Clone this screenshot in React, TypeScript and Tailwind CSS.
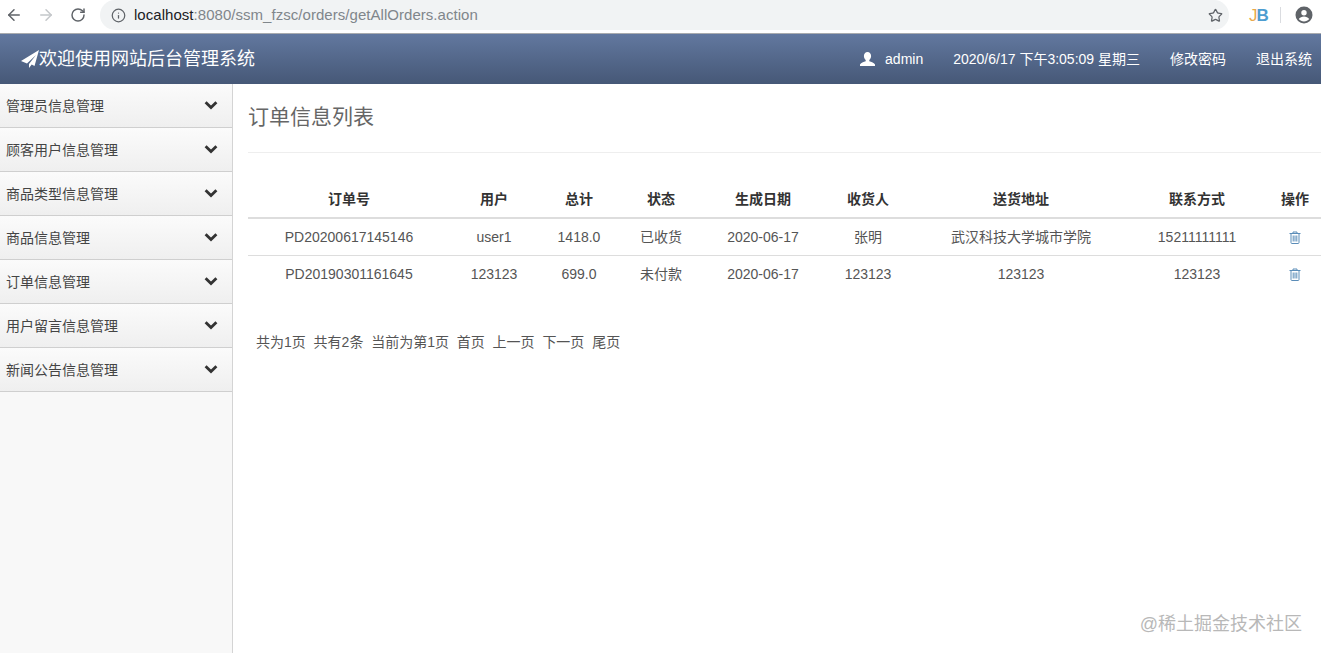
import { ArrowLeft, ArrowRight, RotateCw, Info, Star } from "lucide-react";

const font = { fontFamily: '"Liberation Sans", "Noto Sans CJK SC", sans-serif' };

const menu = ["管理员信息管理", "顾客用户信息管理", "商品类型信息管理", "商品信息管理", "订单信息管理", "用户留言信息管理", "新闻公告信息管理"];
const cols = ["订单号", "用户", "总计", "状态", "生成日期", "收货人", "送货地址", "联系方式"];
const rows = [
  ["PD20200617145146", "user1", "1418.0", "已收货", "2020-06-17", "张明", "武汉科技大学城市学院", "15211111111"],
  ["PD20190301161645", "123123", "699.0", "未付款", "2020-06-17", "123123", "123123", "123123"],
];
const pager = ["共为1页", "共有2条", "当前为第1页", "首页", "上一页", "下一页", "尾页"];

function Chevron() {
  return (
    <svg width="14" height="10" viewBox="0 0 14 10" className="text-[#333]">
      <path d="M1.6 2.2 7 7.6l5.4-5.4" fill="none" stroke="currentColor" strokeWidth="2.8" />
    </svg>
  );
}

function Trash() {
  return (
    <svg width="12" height="13" viewBox="0 0 12 13" fill="none" stroke="#5b8db8" strokeWidth="1">
      <path d="M.5 2.5h11M4 2.5V1h4v1.5M2 2.5v9.2c0 .5.3.8.8.8h6.4c.5 0 .8-.3.8-.8V2.5M4.2 4.5v6M6 4.5v6M7.8 4.5v6" />
    </svg>
  );
}

export default function App() {
  return (
    <div style={font} className="relative flex h-[653px] w-[1321px] flex-col overflow-hidden bg-white text-sm text-[#333]">
      <div className="flex h-[34px] shrink-0 items-center border-b border-[#a9abae] bg-white pb-[3px]">
        <ArrowLeft size={18} strokeWidth={2} className="ml-[5px] text-[#5f6368]" />
        <ArrowRight size={18} strokeWidth={2} className="ml-[14px] text-[#c4c7ca]" />
        <RotateCw size={16} strokeWidth={2.2} className="ml-[15px] text-[#5f6368]" />
        <div className="ml-[14px] flex h-[30px] w-[1129px] items-center rounded-full bg-[#f1f3f4] pl-[11px] pr-[6px]">
          <Info size={15} className="text-[#5f6368]" />
          <span className="ml-[8px] text-[15px] tracking-[0.04px] text-[#80868b]"><span className="text-[#202124]">localhost</span>:8080/ssm_fzsc/orders/getAllOrders.action</span>
          <Star size={15} strokeWidth={2} className="ml-auto text-[#5f6368]" />
        </div>
        <span className="ml-[20px] w-[17px] text-[17px] leading-none tracking-[-1px]"><span className="text-[#e8a94c]">J</span><span className="font-bold text-[#4d9dd0]">B</span></span>
        <div className="ml-[14px] h-[16px] w-px bg-[#dadce0]" />
        <svg width="18" height="18" viewBox="0 0 18 18" className="ml-[14px]">
          <circle cx="9" cy="9" r="8.500" fill="#5f6368" />
          <circle cx="9" cy="6.800" r="2.700" fill="#fff" />
          <path d="M3.800 13c1-1.800 3.200-2.600 5.200-2.600s4.200.8 5.200 2.600c-1.200 1.500-3.100 2.500-5.200 2.500s-4-1-5.200-2.500z" fill="#fff" />
        </svg>
      </div>

      <header className="flex h-[50px] shrink-0 items-center bg-gradient-to-b from-[#62789f] to-[#465877] text-white">
        <svg width="18" height="18" viewBox="0 0 18 18" className="ml-[21px]">
          <path d="M18 0 0 11l6 2.500L15 5 8 14v4l2.700-3.400 2.800 1.400z" fill="#fff" />
        </svg>
        <span className="pt-[2px] text-[18px]">欢迎使用网站后台管理系统</span>
        <svg width="17" height="16" viewBox="0 0 17 16" className="ml-auto">
          <path d="M8.500 1c2.200 0 3.600 1.700 3.600 4 0 1.700-.8 3.200-1.800 4v1.300c1.900.7 5.200 1.600 5.700 3.200V15H1v-1.500c.5-1.600 3.800-2.500 5.700-3.200V9C5.700 8.200 4.900 6.700 4.900 5c0-2.300 1.400-4 3.600-4z" fill="#fff" />
        </svg>
        <span className="ml-[9px]">admin</span>
        <span className="ml-[30px]">2020/6/17 下午3:05:09 星期三</span>
        <span className="ml-[30px]">修改密码</span>
        <span className="ml-[30px] mr-[9px]">退出系统</span>
      </header>

      <div className="flex min-h-0 flex-1">
        <aside className="w-[233px] shrink-0 border-r border-[#d4d4d4] bg-[#f8f8f8]">
          {menu.map((m) => (
            <div key={m} className="flex h-[44px] items-center justify-between border-b border-[#cfcfcf] bg-gradient-to-b from-[#fbfbfb] to-[#efefef] pl-[6px] pr-[14px] text-[#444]">
              <span>{m}</span>
              <span className="-mt-[2px]"><Chevron /></span>
            </div>
          ))}
        </aside>

        <main className="min-w-0 flex-1 pl-[15px]">
          <h1 className="mt-[19px] text-[21px] leading-[28px] text-[#666]">订单信息列表</h1>
          <div className="mt-[21px] h-px bg-[#eeeeee]" />
          <table className="mt-[27px] w-[1073px] table-fixed border-collapse text-center">
            <colgroup>
              <col className="w-[202px]" />
              <col className="w-[88px]" />
              <col className="w-[82px]" />
              <col className="w-[82px]" />
              <col className="w-[122px]" />
              <col className="w-[88px]" />
              <col className="w-[218px]" />
              <col className="w-[134px]" />
              <col className="w-[57px]" />
            </colgroup>
            <thead>
              <tr className="h-[38px] border-b-2 border-[#dddddd]">
                {cols.map((c) => <th key={c} className="pt-px font-bold">{c}</th>)}
                <th className="pl-[5px] pt-px font-bold">操作</th>
              </tr>
            </thead>
            <tbody className="text-[#555]">
              {rows.map((r) => (
                <tr key={r[0]} className="h-[37px] border-b border-[#dddddd] last:border-b-0">
                  {r.map((v, i) => <td key={i}>{v}</td>)}
                  <td className="pb-[2px] pl-[5px]"><span className="inline-flex align-middle"><Trash /></span></td>
                </tr>
              ))}
            </tbody>
          </table>
          <div className="mt-[40px] flex gap-[7.8px] pl-[8px] text-[#555]">
            {pager.map((p) => <span key={p}>{p}</span>)}
          </div>
        </main>
      </div>

      <div className="absolute right-[19px] top-[611px] text-[18px] leading-[26px] text-[#b8b8b8]">@稀土掘金技术社区</div>
    </div>
  );
}
